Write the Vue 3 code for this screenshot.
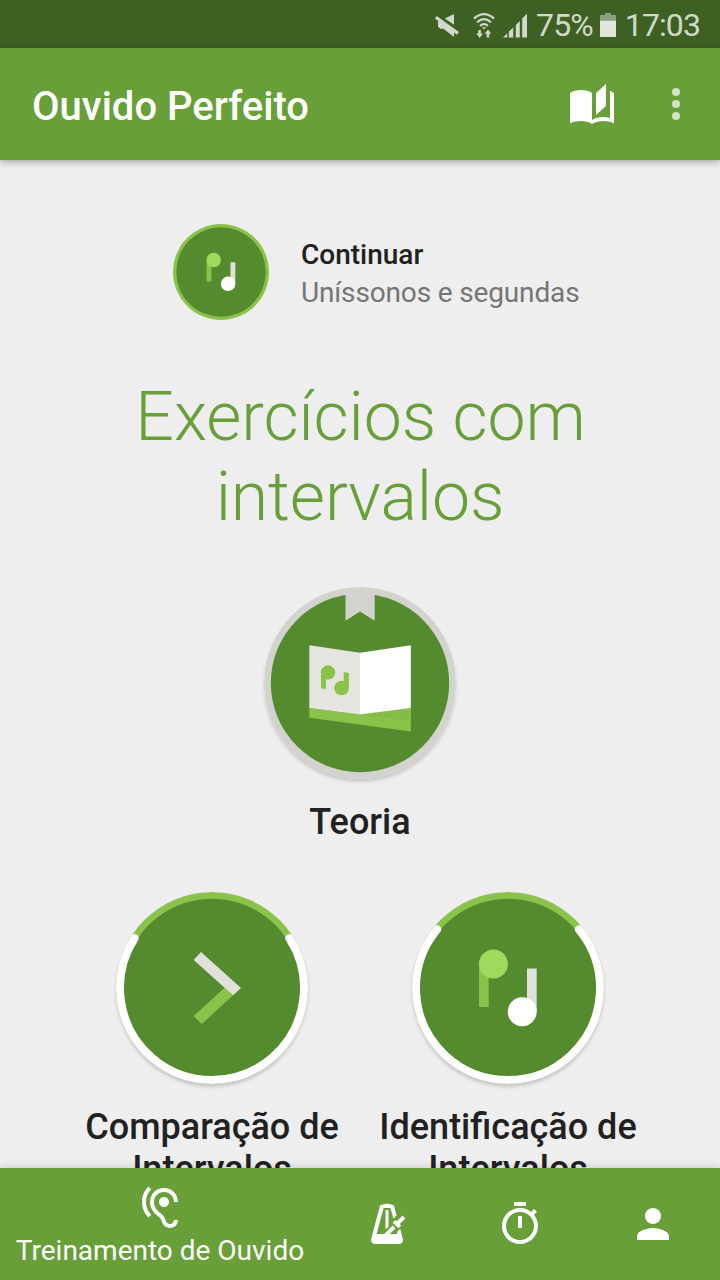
<template>
  <div class="screen">
    <div class="status-bar">
      <svg class="st-mute" viewBox="0 0 24 25">
        <path d="M19 1v10.8l-9.2-6.3zM3 7.5l16 11V24L8.4 15.8H5.2L3 13.5z" />
        <path d="M.8 4.2L23 20.4" class="slash" />
      </svg>
      <svg class="st-wifi" viewBox="0 0 22 25">
        <g class="waves">
          <path d="M1 5.6Q11-3.4 21 5.6" />
          <path d="M4 9.3Q11 3 18 9.3" />
          <path d="M7 12.8Q11 9.4 15 12.8" />
        </g>
        <path d="M8.8 14.2h4.4L11 16.6zM5.3 17h2.6v3.6H10L6.6 25l-3.3-4.4h2zM13.6 24.4h2.6v-3.6h2.1L15 16.4l-3.4 4.4h2z" />
      </svg>
      <svg class="st-signal" viewBox="0 0 24 25">
        <path d="M0 24.5l4.2-4.2v4.2zM5.8 18.8l4.4-4.4v10.1H5.8zM12.8 12l4-4v16.5h-4zM19.2 5.4L24 .8v23.7h-4.8z" />
      </svg>
      <span class="st-percent">75%</span>
      <svg class="st-battery" viewBox="0 0 16 24">
        <path d="M0 2h5V0h6v2h5v5.5H0z" class="empty" />
        <path d="M0 7.5h16V24H0z" class="full" />
      </svg>
      <span class="st-time">17:03</span>
    </div>

    <header class="app-bar">
      <h1>Ouvido Perfeito</h1>
      <svg class="bar-book" viewBox="0 0 24 24">
        <path d="M19 2l-5 4.5v11l5-4.5V2zM6.5 5C4.5 5 2.4 5.4 1 6.5v15.2c1.5-.8 3.8-1.2 5.5-1.2 1.95 0 4.05.4 5.5 1.5 1.35-.85 3.8-1.5 5.5-1.5 1.9 0 3.9.4 5.5 1.2V6.5c-.6-.45-1.25-.75-2-1V19c-1.1-.35-2.3-.5-3.5-.5-1.7 0-4.15.65-5.5 1.5V6.5C10.55 5.4 8.45 5 6.5 5z" />
      </svg>
      <div class="bar-more"><i /><i /><i /></div>
    </header>

    <main class="content">
      <div class="resume">
        <svg class="resume-icon" viewBox="0 0 192 192">
          <circle cx="96" cy="96" r="96" fill="#8bc34a" />
          <circle cx="96" cy="96" r="89.5" fill="#558b2f" />
          <path d="M67 72h9.7v43H67z" fill="#8bc34a" />
          <circle cx="81.4" cy="72" r="14.5" fill="#9edb5d" />
          <path d="M115 76.5h9.7v43H115z" fill="#e0e1da" />
          <circle cx="110.2" cy="119.7" r="14.5" fill="#fff" />
        </svg>
        <div class="resume-text">
          <div class="resume-title">Continuar</div>
          <div class="resume-sub">Uníssonos e segundas</div>
        </div>
      </div>

      <h2>Exercícios com intervalos</h2>

      <div class="lesson theory">
        <svg class="disc" viewBox="0 0 192 192">
          <circle cx="96" cy="96" r="96" fill="#d2d3cc" />
          <circle cx="96" cy="96" r="89.2" fill="#558b2f" />
          <path d="M81.5 5h29.2v28.8L96 24.6l-14.5 9.2z" fill="#d2d3cc" />
          <path d="M45.3 121L96 127.5l50.8-6.5v23.5L45.3 130.8z" fill="#8bc34a" />
          <path d="M96 127.5l50.8-6.5v13.8z" fill="#85bb47" />
          <path d="M45.3 58.2L96 65.7v61.8L45.3 121z" fill="#e4e5de" />
          <path d="M146.8 58.2L96 65.7v61.8l50.8-6.5z" fill="#fff" />
          <g fill="#8bc34a">
            <circle cx="64" cy="85.5" r="7.2" />
            <path d="M57 85.5l5 5V102l-5-.8zM79.7 84.9l5.2 1V101l-5.2-5z" />
            <circle cx="77.6" cy="101" r="7.3" />
          </g>
        </svg>
        <div class="lesson-name">Teoria</div>
      </div>

      <div class="lesson-row">
        <div v-for="l in lessons" :key="l.icon" class="lesson">
          <svg class="disc" viewBox="0 0 192 192">
            <circle cx="96" cy="96" r="96" fill="#8bc34a" />
            <circle cx="96" cy="96" r="89.3" fill="#558b2f" />
            <path :d="arc(l.progress)" class="progress" />
            <template v-if="l.icon === 'compare'">
              <path d="M77.7 124l31.3-28.7 8 8L85.7 132z" fill="#8bc34a" />
              <path d="M85 60l40 36-8 7.3L77.7 68z" fill="#e0e1da" />
            </template>
            <template v-else>
              <path d="M67 72h9.7v43H67z" fill="#8bc34a" />
              <circle cx="81.4" cy="72" r="14.5" fill="#9edb5d" />
              <path d="M115 76.5h9.7v43H115z" fill="#e0e1da" />
              <circle cx="110.2" cy="119.7" r="14.5" fill="#fff" />
            </template>
          </svg>
          <div class="lesson-name">{{ l.name }}</div>
        </div>
      </div>
    </main>

    <nav class="bottom-nav">
      <div v-for="t in tabs" :key="t.key" :class="['tab', { active: t.label }]">
        <svg viewBox="0 0 24 24"><path :d="t.path" /></svg>
        <span v-if="t.label">{{ t.label }}</span>
      </div>
    </nav>
  </div>
</template>

<script setup>
const lessons = [
  { icon: 'compare', name: 'Comparação de Intervalos', progress: 0.682 },
  { icon: 'identify', name: 'Identificação de Intervalos', progress: 0.72 },
];

const tabs = [
  {
    key: 'ear',
    label: 'Treinamento de Ouvido',
    path: 'M17 20c-.29 0-.56-.06-.76-.15-.71-.37-1.21-.88-1.71-2.38-.51-1.56-1.47-2.29-2.39-3-.79-.61-1.61-1.24-2.32-2.53C9.29 10.98 9 9.93 9 9c0-2.8 2.2-5 5-5s5 2.2 5 5h2c0-3.93-3.07-7-7-7S7 5.07 7 9c0 1.26.38 2.65 1.07 3.9.91 1.65 1.98 2.48 2.85 3.15.81.62 1.39 1.07 1.71 2.05.6 1.82 1.37 2.84 2.73 3.55.51.23 1.07.35 1.64.35 2.21 0 4-1.79 4-4h-2c0 1.1-.9 2-2 2zM7.64 2.64L6.22 1.22C4.23 3.21 3 5.96 3 9s1.23 5.79 3.22 7.78l1.41-1.41C6.01 13.74 5 11.49 5 9s1.01-4.74 2.64-6.36zM11.5 9c0 1.38 1.12 2.5 2.5 2.5s2.5-1.12 2.5-2.5-1.12-2.5-2.5-2.5-2.5 1.12-2.5 2.5z',
  },
  {
    key: 'metronome',
    path: 'M12 1.75l-3.43.92L4.06 19.53c-.03.15-.06.31-.06.47 0 1.11.89 2 2 2h12c1.11 0 2-.89 2-2 0-.16-.03-.32-.06-.47l-1.36-5.11L17 16l.2 1h-3.79l2.84-2.84-1.41-1.41L10.59 17H6.8l3.49-13h3.42l1.46 5.43 1.63-1.64-1.37-5.12L12 1.75zM11.25 5v9.75l1.5-1.5V5h-1.5zm8.54 2.8l-2.83 2.83-.71-.71-1.41 1.42 2.82 2.82 1.42-1.41-.71-.71 2.83-2.83-1.41-1.41z',
  },
  {
    key: 'timer',
    path: 'M15 1H9v2h6V1zm-4 13h2V8h-2v6zm8.03-6.61l1.42-1.42c-.43-.51-.9-.99-1.41-1.41l-1.42 1.42C16.07 4.74 14.12 4 12 4c-4.97 0-9 4.03-9 9s4.02 9 9 9 9-4.03 9-9c0-2.12-.74-4.07-1.97-5.61zM12 20c-3.87 0-7-3.13-7-7s3.13-7 7-7 7 3.13 7 7-3.13 7-7 7z',
  },
  {
    key: 'profile',
    path: 'M12 12c2.21 0 4-1.79 4-4s-1.79-4-4-4-4 1.79-4 4 1.79 4 4 4zm0 2c-2.67 0-8 1.34-8 4v2h16v-2c0-2.66-5.33-4-8-4z',
  },
];

// arc centred on the bottom of the disc, growing up both sides
function arc(progress) {
  const r = 92;
  const a = progress * Math.PI;
  const x = r * Math.sin(a);
  const y = 96 + r * Math.cos(a);
  return `M${96 - x} ${y}A${r} ${r} 0 ${progress > 0.5 ? 1 : 0} 0 ${96 + x} ${y}`;
}
</script>

<style>
body { margin: 0; background: #eee; }
</style>

<style scoped>
.screen {
  width: 720px; height: 1280px;
  display: flex; flex-direction: column;
  overflow: hidden;
  background: #eee;
  color: #212121;
  font-family: Roboto, "Liberation Sans", sans-serif;
}
h1, h2 { margin: 0; }
svg { display: block; flex: none; }

.status-bar {
  height: 48px; flex: none;
  box-sizing: border-box;
  padding: 2px 20px 0 0;
  display: flex; align-items: center; justify-content: flex-end;
  background: #3e6123;
  color: #d0d9ca;
  fill: #d0d9ca;
  font-size: 32px;
  line-height: 46px;
  letter-spacing: -.9px;
}
.st-mute { width: 24px; height: 25px; margin-right: 14px; }
.st-mute .slash { stroke: #d0d9ca; stroke-width: 3.2; }
.st-wifi { width: 22px; height: 25px; margin-right: 8px; }
.st-wifi .waves { fill: none; stroke: #d0d9ca; stroke-width: 2.2; }
.st-signal { width: 24px; height: 25px; margin-right: 9px; }
.st-battery { width: 16px; height: 24px; margin: 0 9px 0 7px; }
.st-battery .empty { fill: #8b9f7c; }
.st-battery .full { fill: #e0e6dc; }

.app-bar {
  height: 112px; flex: none;
  box-sizing: border-box;
  padding: 0 40px 0 32px;
  display: flex; align-items: center;
  position: relative; z-index: 1;
  background: #689f38;
  color: #fff;
  fill: #fff;
  box-shadow: 0 2px 7px rgba(0, 0, 0, .32);
}
.app-bar h1 {
  flex: 1;
  font-size: 40px; font-weight: 500; line-height: 48px;
  padding-top: 6px;
}
.bar-book { width: 48px; height: 48px; margin-right: 56px; }
.bar-more { display: flex; flex-direction: column; gap: 4px; }
.bar-more i { width: 8px; height: 8px; border-radius: 50%; background: #d2e2c3; }

.content { flex: 1; min-height: 0; overflow: hidden; }
.resume {
  display: flex; align-items: center; gap: 32px;
  padding: 64px 0 0 173px;
}
.resume-icon { width: 96px; height: 96px; }
.resume-text { font-size: 28px; line-height: 38px; padding-top: 4px; }
.resume-title { font-weight: 500; }
.resume-sub { color: #757575; letter-spacing: -.15px; }

h2 {
  width: 500px;
  margin: 57px auto 0;
  font-size: 68px; font-weight: 300; line-height: 80px;
  letter-spacing: -.1px;
  text-align: center;
  text-indent: 1px;
  color: #689f38;
}

.lesson { display: flex; flex-direction: column; align-items: center; }
.theory { margin-top: 50px; }
.disc {
  width: 192px; height: 192px;
  border-radius: 50%;
  box-shadow: 0 3px 4px -1px rgba(0, 0, 0, .22);
}
.lesson-name {
  margin-top: 22px;
  font-size: 36px; font-weight: 500; line-height: 42px;
  text-align: center;
}
.lesson-row {
  display: grid; grid-template-columns: 296px 296px;
  justify-content: center;
  margin-top: 49px;
}
.progress {
  fill: none;
  stroke: #fff; stroke-width: 8; stroke-linecap: round;
}

.bottom-nav {
  height: 112px; flex: none;
  display: grid; grid-template-columns: 320px repeat(3, 1fr);
  position: relative; z-index: 1;
  background: #689f38;
  color: #fff;
  fill: #fff;
  box-shadow: 0 -1px 7px rgba(0, 0, 0, .14);
}
.tab {
  display: flex; flex-direction: column; align-items: center; justify-content: center;
  font-size: 28px; line-height: 38px;
  white-space: nowrap;
}
.tab svg { width: 48px; height: 48px; }
.tab.active { justify-content: flex-start; padding-top: 16px; }
</style>
